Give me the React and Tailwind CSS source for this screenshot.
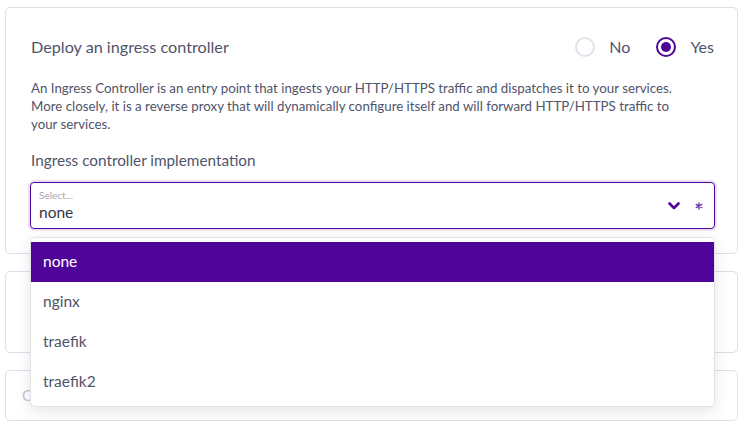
import { useState } from "react"

const OPTIONS = ["none", "nginx", "traefik", "traefik2"]

function Radio({ label, checked, onClick }) {
    return (
        <button type="button" onClick={onClick} className="flex items-center gap-[14px]">
            <span
                className={`flex h-5 w-5 items-center justify-center rounded-full border-2 ${checked ? "border-[#4f0599]" : "border-[#e0e2ec]"}`}
            >
                {checked && <span className="h-2.5 w-2.5 rounded-full bg-[#4f0599]" />}
            </span>
            <span className="text-[16px] text-[#50546a]">{label}</span>
        </button>
    )
}

export default function App() {
    const [deploy, setDeploy] = useState(true)
    const [value, setValue] = useState("none")

    return (
        <div className="min-h-[426px] bg-white pl-[5px] pt-[7px] font-['Lato','Open_Sans',sans-serif] text-[#50546a]">
            <div className="flex w-[733px] flex-col gap-[17px]">
                <section className="rounded-[5px] border border-[#dcdfe9] pb-[24px] pl-[24px] pr-[22px] pt-[27px]">
                    <div className="flex items-center justify-between pl-px pr-[1px]">
                        <h2 className="text-[16.2px] leading-6">Deploy an ingress controller</h2>
                        <div className="flex items-center gap-[26px]">
                            <Radio label="No" checked={!deploy} onClick={() => setDeploy(false)} />
                            <Radio label="Yes" checked={deploy} onClick={() => setDeploy(true)} />
                        </div>
                    </div>

                    <p className="mt-5 whitespace-nowrap pl-px text-[13.3px] leading-[18px]">
                        An Ingress Controller is an entry point that ingests your HTTP/HTTPS traffic and dispatches it to your services.
                        <br />
                        More closely, it is a reverse proxy that will dynamically configure itself and will forward HTTP/HTTPS traffic to
                        <br />
                        your services.
                    </p>

                    <h3 className="mt-4 pl-px text-[15.3px] leading-[22px]">Ingress controller implementation</h3>

                    <div className="relative mt-[11px]">
                        <div className="flex h-[47px] items-center rounded-[4px] border border-[#4f0599] pl-2 pr-[11px] shadow-[0_0_0_2px_rgba(79,5,153,0.12)]">
                            <div className="flex flex-1 flex-col">
                                <span className="text-[10px] leading-[13px] text-[#a5a8ba]">Select...</span>
                                <span className="text-[15.5px] leading-[20px] text-[#33364a]">{value}</span>
                            </div>
                            <svg viewBox="0 0 12 8" className="h-[8px] w-[12px] text-[#4f0599]" fill="none" stroke="currentColor" strokeWidth="2.6" strokeLinecap="round" strokeLinejoin="round">
                                <path d="M1.5 1.5 6 6l4.5-4.5" />
                            </svg>
                            <svg viewBox="0 0 10 10" className="ml-[15px] h-[8px] w-[8px] text-[#6b2fb0]" fill="none" stroke="currentColor" strokeWidth="1.6" strokeLinecap="round">
                                <path d="M5 1v8M1.5 3l7 4M8.5 3l-7 4" />
                            </svg>
                        </div>

                        <ul className="absolute left-0 right-0 top-[55px] z-10 rounded-[5px] border border-[#e2e3ea] bg-white py-1 shadow-[0_4px_14px_rgba(30,30,60,0.12)]">
                            {OPTIONS.map(option => (
                                <li
                                    key={option}
                                    onClick={() => setValue(option)}
                                    className={`flex h-10 cursor-pointer items-center px-3 text-[15.5px] ${option === value ? "bg-[#4f0599] text-white" : "text-[#50546a]"}`}
                                >
                                    {option}
                                </li>
                            ))}
                        </ul>
                    </div>
                </section>

                <section className="h-[82px] rounded-[5px] border border-[#dcdfe9]" />

                <section className="flex h-[51px] items-center rounded-[5px] border border-[#dcdfe9] px-4">
                    <span className="text-[15px] text-[#c4c6d2]">Cluster</span>
                </section>
            </div>
        </div>
    )
}
